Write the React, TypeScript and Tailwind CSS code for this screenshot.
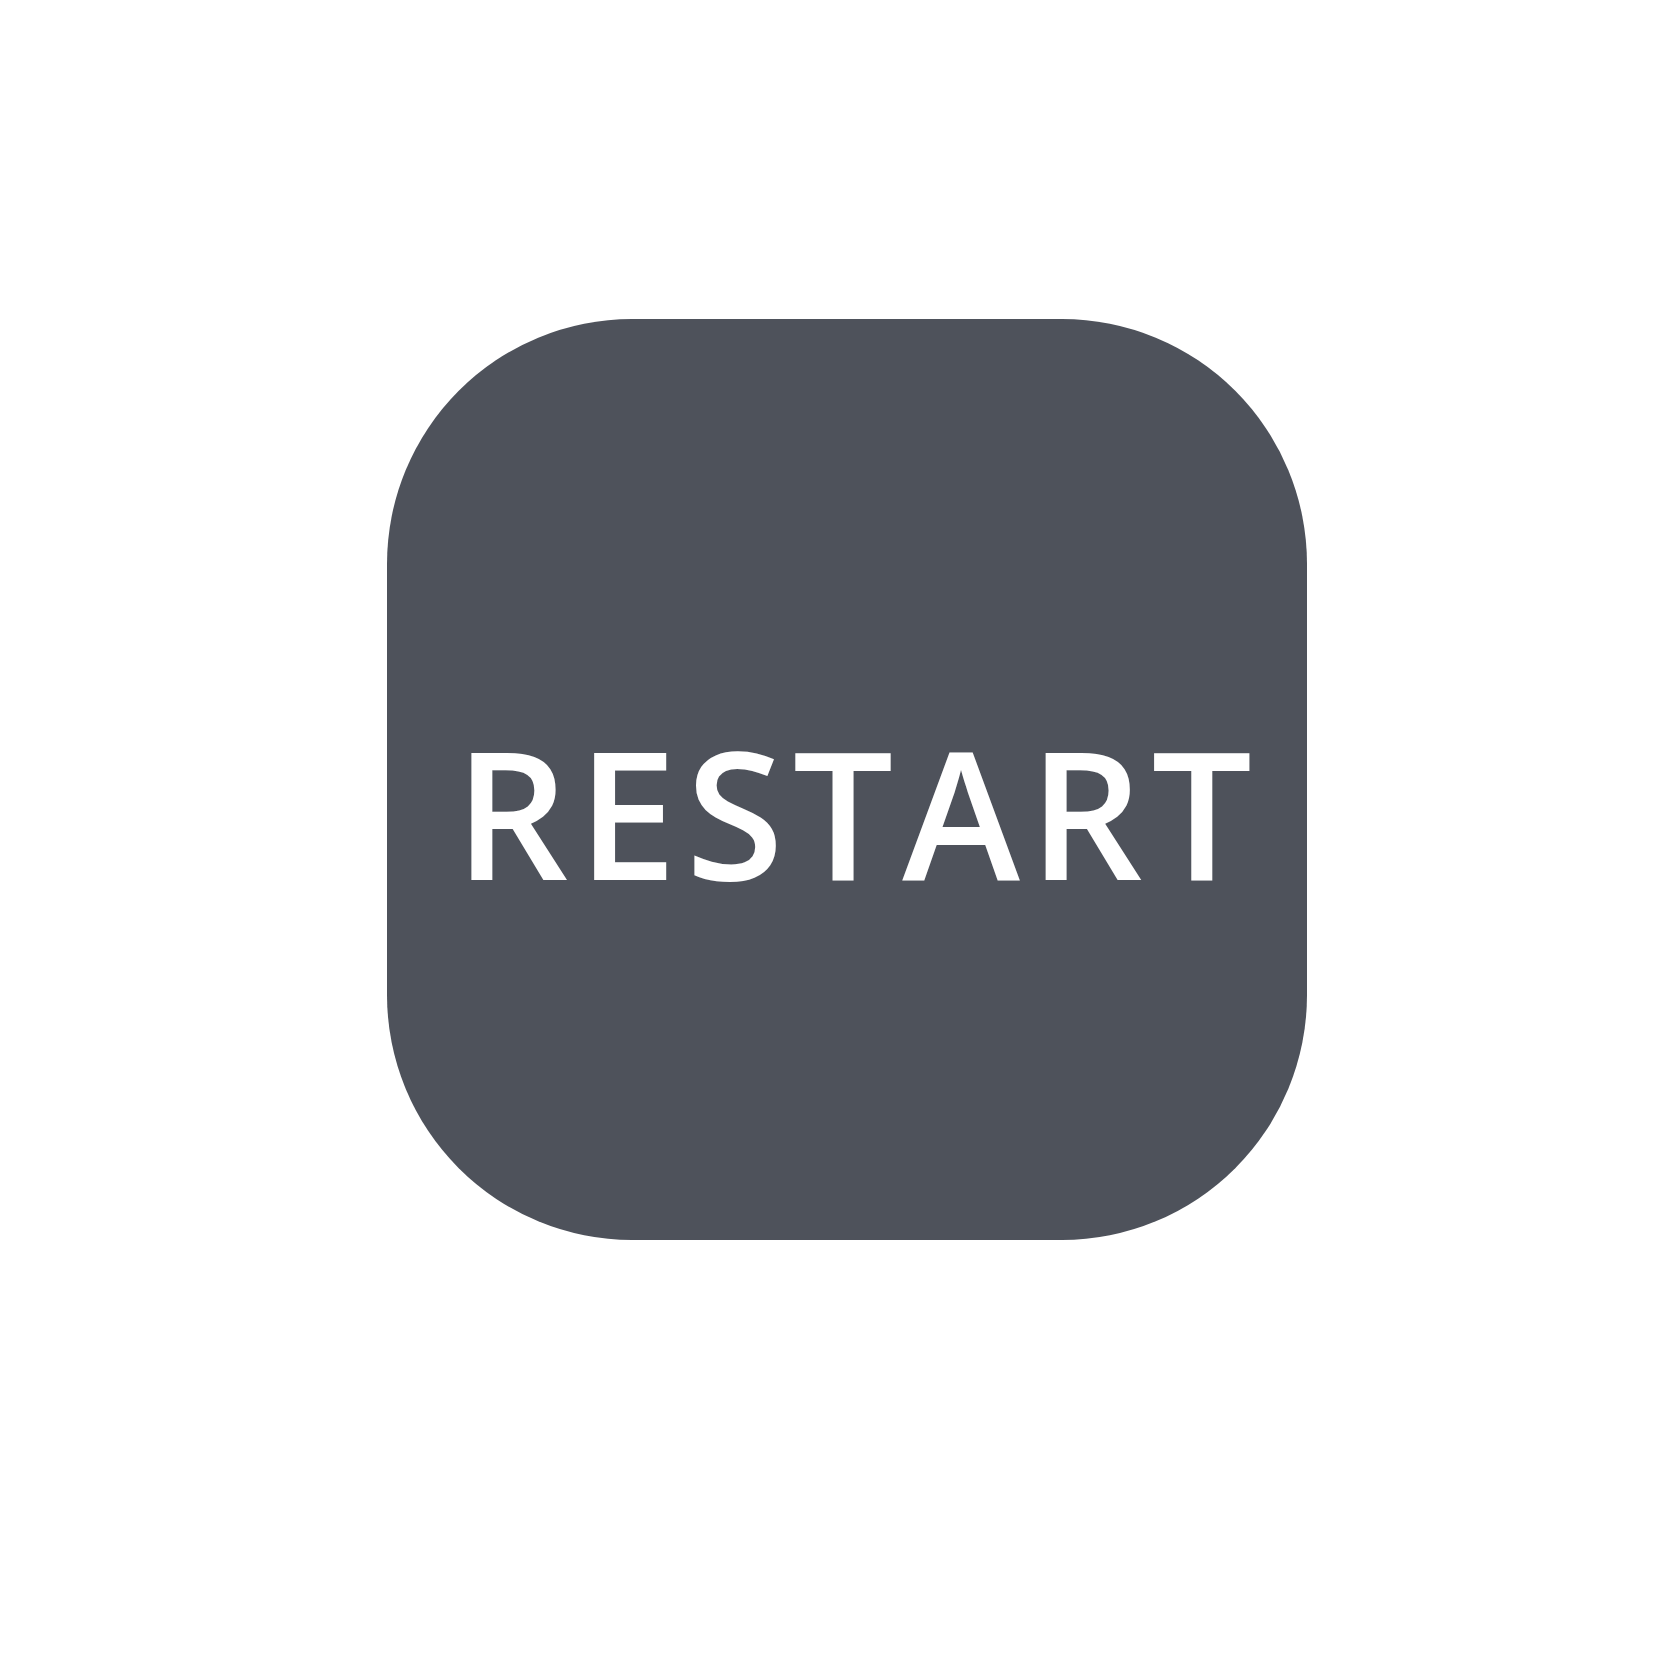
export default function App() {
  return (
    <div className="w-full h-[1668px] bg-white pt-[319px] pl-[387px]">
      <button
        type="button"
        className="w-[920px] h-[921px] rounded-[245px] bg-[#4e525b] flex items-center justify-center pt-[62px] pl-[22px]"
      >
        <span
          className="text-white text-[178px] font-semibold leading-none tracking-[9px]"
          style={{ fontFamily: '"Open Sans", "Liberation Sans", sans-serif' }}
        >
          RESTART
        </span>
      </button>
    </div>
  );
}
